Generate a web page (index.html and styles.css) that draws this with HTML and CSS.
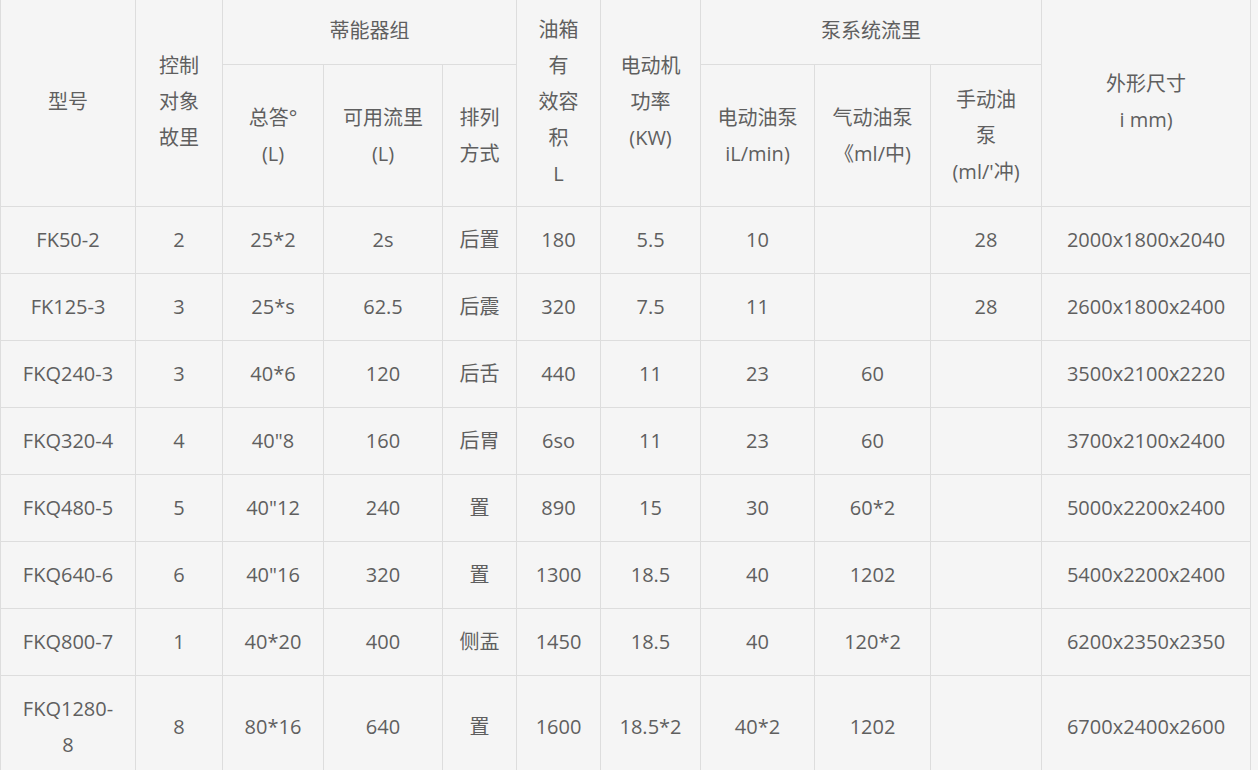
FILE: index.html
```html
<!DOCTYPE html>
<html lang="zh">
<head>
<meta charset="utf-8">
<title>蓄能器表</title>
<link rel="stylesheet" href="styles.css">
</head>
<body>
<table class="spec">
  <colgroup>
    <col class="c1"><col class="c2"><col class="c3"><col class="c4"><col class="c5"><col class="c6"><col class="c7"><col class="c8"><col class="c9"><col class="c10"><col class="c11">
  </colgroup>
  <thead>
    <tr>
      <td rowspan="2">型号</td>
      <td rowspan="2">控制<br>对象<br>故里</td>
      <td colspan="3">蒂能器组</td>
      <td rowspan="2">油箱<br>有<br>效容<br>积<br>L</td>
      <td rowspan="2">电动机<br>功率<br>(KW)</td>
      <td colspan="3">泵系统流里</td>
      <td rowspan="2">外形尺寸<br>i mm)</td>
    </tr>
    <tr>
      <td>总答°<br>(L)</td>
      <td>可用流里<br>(L)</td>
      <td>排列<br>方式</td>
      <td>电动油泵<br>iL/min)</td>
      <td>气动油泵<br>《ml/中)</td>
      <td>手动油<br>泵<br>(ml/'冲)</td>
    </tr>
  </thead>
  <tbody>
    <tr><td>FK50-2</td><td>2</td><td>25*2</td><td>2s</td><td>后置</td><td>180</td><td>5.5</td><td>10</td><td></td><td>28</td><td>2000x1800x2040</td></tr>
    <tr><td>FK125-3</td><td>3</td><td>25*s</td><td>62.5</td><td>后震</td><td>320</td><td>7.5</td><td>11</td><td></td><td>28</td><td>2600x1800x2400</td></tr>
    <tr><td>FKQ240-3</td><td>3</td><td>40*6</td><td>120</td><td>后舌</td><td>440</td><td>11</td><td>23</td><td>60</td><td></td><td>3500x2100x2220</td></tr>
    <tr><td>FKQ320-4</td><td>4</td><td>40"8</td><td>160</td><td>后胃</td><td>6so</td><td>11</td><td>23</td><td>60</td><td></td><td>3700x2100x2400</td></tr>
    <tr><td>FKQ480-5</td><td>5</td><td>40"12</td><td>240</td><td>置</td><td>890</td><td>15</td><td>30</td><td>60*2</td><td></td><td>5000x2200x2400</td></tr>
    <tr><td>FKQ640-6</td><td>6</td><td>40"16</td><td>320</td><td>置</td><td>1300</td><td>18.5</td><td>40</td><td>1202</td><td></td><td>5400x2200x2400</td></tr>
    <tr><td>FKQ800-7</td><td>1</td><td>40*20</td><td>400</td><td>侧盂</td><td>1450</td><td>18.5</td><td>40</td><td>120*2</td><td></td><td>6200x2350x2350</td></tr>
    <tr><td>FKQ1280-<br>8</td><td>8</td><td>80*16</td><td>640</td><td>置</td><td>1600</td><td>18.5*2</td><td>40*2</td><td>1202</td><td></td><td>6700x2400x2600</td></tr>
  </tbody>
</table>
</body>
</html>
```
FILE: styles.css
```css
html, body {
  margin: 0;
  padding: 0;
  background: #f5f5f5;
}
body {
  font-family: "Open Sans", "Noto Sans CJK SC", sans-serif;
  font-size: 20px;
  color: #5f5f5f;
  overflow: hidden;
}
.spec {
  border-collapse: collapse;
  table-layout: fixed;
  width: 1250px;
  margin-top: -3px;
  background: #f5f5f5;
}
.spec td {
  border: 1px solid #ddd;
  padding: 15px 8px;
  line-height: 36px;
  text-align: center;
  vertical-align: middle;
  white-space: nowrap;
}
.spec thead td {
  padding-top: 14px;
  padding-bottom: 14px;
}
.c1 { width: 135px; }
.c2 { width: 87px; }
.c3 { width: 101px; }
.c4 { width: 119px; }
.c5 { width: 74px; }
.c6 { width: 84px; }
.c7 { width: 100px; }
.c8 { width: 114px; }
.c9 { width: 116px; }
.c10 { width: 111px; }
.c11 { width: 209px; }
```
